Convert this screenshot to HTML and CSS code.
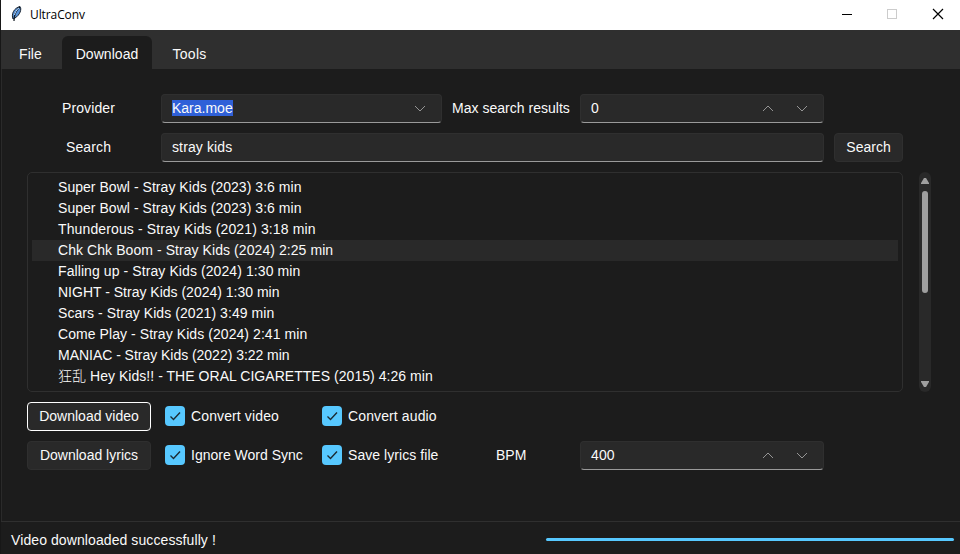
FILE: index.html
```html
<!DOCTYPE html>
<html lang="en">
<head>
<meta charset="utf-8">
<title>UltraConv</title>
<link rel="stylesheet" href="styles.css">
</head>
<body>
<div class="window">
  <header class="titlebar">
    <svg class="feather" width="12" height="16" viewBox="0 0 12 16"><path d="M2 13C0 8 3 2 9 .5C11 3 9 9 4 12Z" fill="#5792d8" stroke="#17202b"/><path d="M9 1C4 5 3 9 3 15" fill="none" stroke="#101820" stroke-width="1.2"/><path d="M8 2C5 4 4 7 3.5 9" fill="none" stroke="#b5d6fa"/></svg>
    <span class="title">UltraConv</span>
    <svg class="controls" width="102" height="12" viewBox="0 0 102 12" fill="none"><path d="M0 6.500H10" stroke="#000"/><rect x="45.500" y="1.500" width="9" height="9" stroke="#ccc"/><path d="M91 1L101 11M101 1L91 11" stroke="#000" stroke-width="1.2"/></svg>
  </header>
  <nav class="tabs">
    <div class="tab file"><span>File</span></div>
    <div class="tab active"><span>Download</span></div>
    <div class="tab tools"><span>Tools</span></div>
  </nav>
  <main class="panel">
    <div class="row">
      <label class="caption">Provider</label>
      <div class="field provider"><span class="selected">Kara.moe</span><svg class="arrow" viewBox="0 0 12 7"><path d="M1 1L6 6L11 1"/></svg></div>
      <label class="max">Max search results</label>
      <div class="field spin"><span class="num">0</span><svg class="arrow" viewBox="0 0 12 7"><path d="M1 6L6 1L11 6"/></svg><svg class="arrow" viewBox="0 0 12 7"><path d="M1 1L6 6L11 1"/></svg></div>
    </div>
    <div class="row">
      <label class="caption">Search</label>
      <div class="field query"><span class="q">stray kids</span></div>
      <div class="button go"><span>Search</span></div>
    </div>
    <div class="results">
      <ul class="list">
        <li class="t1">Super Bowl - Stray Kids (2023) 3:6 min</li>
        <li class="t1">Super Bowl - Stray Kids (2023) 3:6 min</li>
        <li class="t2">Thunderous - Stray Kids (2021) 3:18 min</li>
        <li class="t3 current">Chk Chk Boom - Stray Kids (2024) 2:25 min</li>
        <li class="t4">Falling up - Stray Kids (2024) 1:30 min</li>
        <li class="t5">NIGHT - Stray Kids (2024) 1:30 min</li>
        <li class="t3">Scars - Stray Kids (2021) 3:49 min</li>
        <li class="t3">Come Play - Stray Kids (2024) 2:41 min</li>
        <li class="t8">MANIAC - Stray Kids (2022) 3:22 min</li>
        <li class="t1"><span class="cjk">狂乱</span> Hey Kids!! - THE ORAL CIGARETTES (2015) 4:26 min</li>
      </ul>
      <div class="scrollbar">
        <svg width="8" height="6" viewBox="0 0 8 6"><path d="M3 0H5L8 5V6H0V5Z"/></svg>
        <div class="thumb"></div>
        <svg width="8" height="6" viewBox="0 0 8 6"><path d="M3 6H5L8 1V0H0V1Z"/></svg>
      </div>
    </div>
    <div class="row">
      <div class="button action focused"><span>Download video</span></div>
      <div class="check first"><svg viewBox="0 0 20 20"><path d="M5.500 10.500L8.500 13.500L15 6.500"/></svg><span>Convert video</span></div>
      <div class="check"><svg viewBox="0 0 20 20"><path d="M5.500 10.500L8.500 13.500L15 6.500"/></svg><span>Convert audio</span></div>
    </div>
    <div class="row">
      <div class="button action"><span>Download lyrics</span></div>
      <div class="check first tight"><svg viewBox="0 0 20 20"><path d="M5.500 10.500L8.500 13.500L15 6.500"/></svg><span>Ignore Word Sync</span></div>
      <div class="check second"><svg viewBox="0 0 20 20"><path d="M5.500 10.500L8.500 13.500L15 6.500"/></svg><span>Save lyrics file</span></div>
      <label class="bpm">BPM</label>
      <div class="field spin"><span class="num">400</span><svg class="arrow" viewBox="0 0 12 7"><path d="M1 6L6 1L11 6"/></svg><svg class="arrow" viewBox="0 0 12 7"><path d="M1 1L6 6L11 1"/></svg></div>
    </div>
  </main>
  <footer class="status"><span>Video downloaded successfully !</span><div class="progress"></div></footer>
</div>
</body>
</html>
```

FILE: styles.css
```css
* { box-sizing: border-box; }
body {
  margin: 0;
  background: #1c1c1c;
  color: #fafafa;
  font: 14px/20px "Liberation Sans", "Noto Sans CJK JP", sans-serif;
  letter-spacing: 0.12px;
  white-space: nowrap;
}
.window { width: 960px; height: 554px; display: flex; flex-direction: column; overflow: hidden; border-left: 1px solid #171717; }
.titlebar { height: 30px; flex: none; display: flex; align-items: center; background: #fff; color: #000; padding: 0 16px 2px 10px; }
.title { font: 12px/16px "Open Sans", sans-serif; margin-left: 7px; letter-spacing: -0.1px; padding-top: 2px; }
.controls { margin-left: auto; }
.tabs { height: 39px; flex: none; display: flex; background: #2f2f2f; padding: 6px 0 0 1px; }
.tab { height: 33px; padding-top: 8px; text-align: center; }
.tab.file { width: 60px; padding-right: 3px; }
.tab.active { width: 90px; background: #1c1c1c; border-radius: 6px 6px 0 0; letter-spacing: 0.04px; }
.tab.tools { width: 75px; letter-spacing: 0.3px; }
.panel { flex: 1; border-left: 1px solid #2a2a2a; padding: 25px 29px 0 25px; display: flex; flex-direction: column; gap: 10px; }
.row { display: flex; height: 29px; flex: none; align-items: center; }
.caption { width: 134px; padding: 0 11px 2px 0; text-align: center; }
.field { height: 29px; display: flex; align-items: center; padding: 0 16px 0 11px; background: #292929; border: 1px solid #2f2f2f; border-bottom-color: #9a9a9a; border-radius: 4px; }
.field > span { margin-left: -1px; padding-bottom: 2px; }
.provider { width: 281px; padding-right: 15px; }
.provider .arrow { margin-left: auto; }
.field > .selected { background: #2f60d8; height: 16px; line-height: 16px; padding: 0; margin-bottom: 1px; letter-spacing: 0; }
.arrow { width: 12px; height: 7px; fill: none; stroke: #959595; stroke-width: 1; }
.max { width: 138px; padding: 0 0 2px 10px; letter-spacing: 0.02px; }
.spin { width: 244px; gap: 22px; padding-right: 15px; }
.spin .num { margin-right: auto; }
.query { width: 663px; }
.button { height: 29px; display: flex; align-items: center; justify-content: center; background: #292929; border: 1px solid #2f2f2f; border-radius: 4px; padding-bottom: 2px; letter-spacing: 0; }
.go { width: 69px; margin-left: 10px; }
.results { display: flex; height: 220px; gap: 16px; flex: none; }
.list { width: 876px; height: 220px; margin: 0; padding: 4px; list-style: none; border: 1px solid #2f2f2f; border-radius: 5px; }
.list li { height: 21px; line-height: 21px; padding-left: 26px; }
.list .current { background: #292929; }
.t1 { letter-spacing: 0.04px; }
.t3 { letter-spacing: 0.07px; }
.t4 { letter-spacing: 0.09px; }
.t5 { letter-spacing: 0; }
.t8 { letter-spacing: -0.03px; }
.cjk { font-weight: 300; }
.scrollbar { width: 12px; border-radius: 6px; background: #292929; padding: 6px 0 5px; display: flex; flex-direction: column; align-items: center; fill: #9f9f9f; }
.scrollbar svg { flex: none; }
.scrollbar svg:last-child { margin-top: auto; }
.thumb { width: 6px; height: 102px; margin-top: 7px; border-radius: 3px; background: #9f9f9f; }
.action { width: 124px; }
.focused { border-color: #fff; }
.check { display: flex; align-items: center; gap: 6px; padding-bottom: 1px; }
.check.first { width: 157px; margin-left: 14px; }
.check.second { width: 174px; letter-spacing: 0.06px; }
.check.tight { letter-spacing: 0; }
.check svg { width: 20px; height: 20px; margin-bottom: 1px; border-radius: 4px; background: #57c8ff; fill: none; stroke: #1c2b33; stroke-width: 1.4; }
.check span { padding-bottom: 1px; }
.bpm { width: 84px; padding-bottom: 2px; letter-spacing: 0; }
.status { height: 33px; flex: none; display: flex; align-items: center; border-top: 1px solid #2f2f2f; padding: 4px 6px 0 10px; letter-spacing: 0.09px; }
.progress { width: 408px; height: 3px; margin-left: auto; margin-bottom: 1px; border-radius: 2px; background: #57c8ff; }
```
